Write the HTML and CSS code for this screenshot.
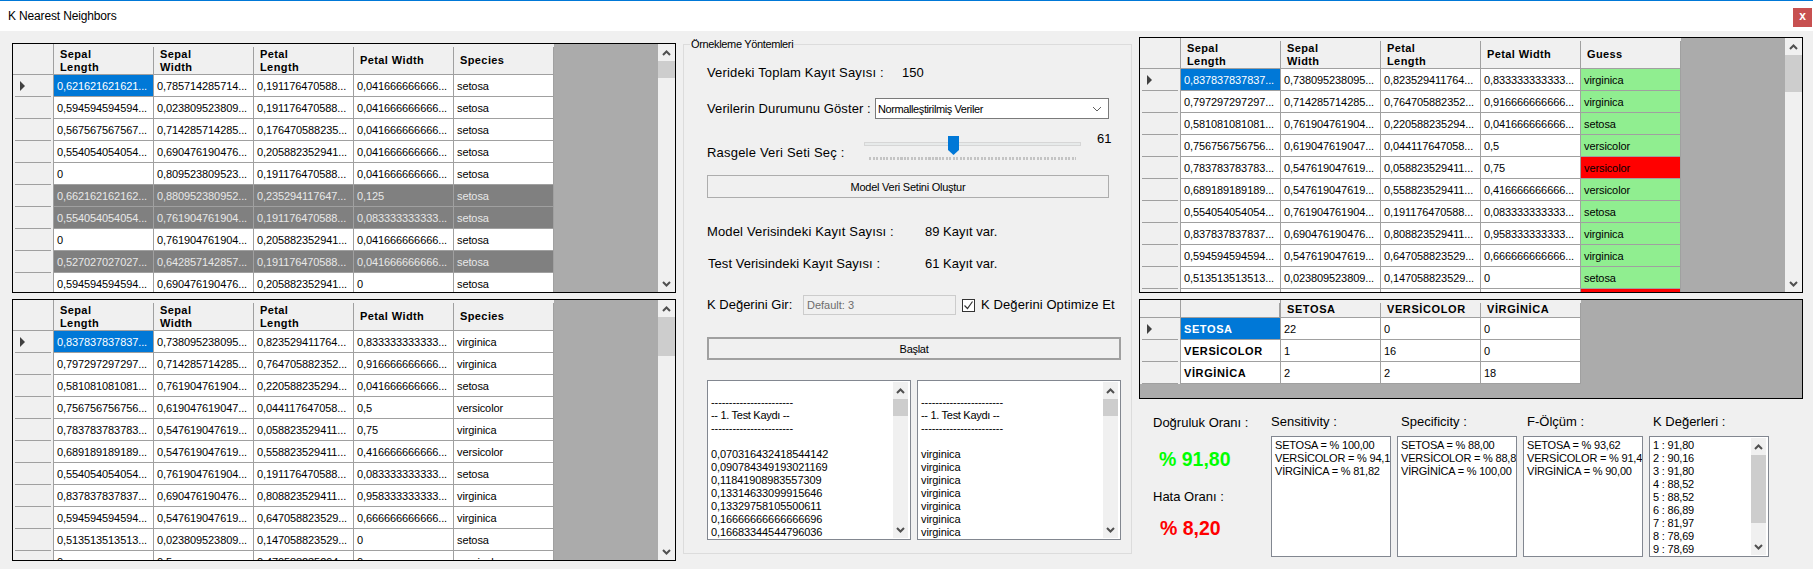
FILE: index.html
```html
<!DOCTYPE html>
<html lang="tr">
<head>
    <meta charset="UTF-8">
    <title>K Nearest Neighbors</title>
    <link rel="stylesheet" href="styles.css">
</head>
<body>
    <div class="titlebar">
        <span class="title">K Nearest Neighbors</span>
        <span class="close">x</span>
    </div>

    <div class="content">
        <!-- Sol taraf: model ve test verileri -->
        <div class="col-left">
            <div class="grid grid-short">
                <div class="grid-area">
                    <table>
                        <tr class="head"><th class="rh"></th><th>Sepal<br>Length</th><th>Sepal<br>Width</th><th>Petal<br>Length</th><th>Petal Width</th><th>Species</th></tr>
                        <tr><th class="rh"><i class="arrow"></i></th><td class="sel">0,621621621621...</td><td>0,785714285714...</td><td>0,191176470588...</td><td>0,041666666666...</td><td>setosa</td></tr>
                        <tr><th class="rh"></th><td>0,594594594594...</td><td>0,023809523809...</td><td>0,191176470588...</td><td>0,041666666666...</td><td>setosa</td></tr>
                        <tr><th class="rh"></th><td>0,567567567567...</td><td>0,714285714285...</td><td>0,176470588235...</td><td>0,041666666666...</td><td>setosa</td></tr>
                        <tr><th class="rh"></th><td>0,554054054054...</td><td>0,690476190476...</td><td>0,205882352941...</td><td>0,041666666666...</td><td>setosa</td></tr>
                        <tr><th class="rh"></th><td>0</td><td>0,809523809523...</td><td>0,191176470588...</td><td>0,041666666666...</td><td>setosa</td></tr>
                        <tr class="dark"><th class="rh"></th><td>0,662162162162...</td><td>0,880952380952...</td><td>0,235294117647...</td><td>0,125</td><td>setosa</td></tr>
                        <tr class="dark"><th class="rh"></th><td>0,554054054054...</td><td>0,761904761904...</td><td>0,191176470588...</td><td>0,083333333333...</td><td>setosa</td></tr>
                        <tr><th class="rh"></th><td>0</td><td>0,761904761904...</td><td>0,205882352941...</td><td>0,041666666666...</td><td>setosa</td></tr>
                        <tr class="dark"><th class="rh"></th><td>0,527027027027...</td><td>0,642857142857...</td><td>0,191176470588...</td><td>0,041666666666...</td><td>setosa</td></tr>
                        <tr><th class="rh"></th><td>0,594594594594...</td><td>0,690476190476...</td><td>0,205882352941...</td><td>0</td><td>setosa</td></tr>
                    </table>
                </div>
                <div class="scrollbar">
                    <div class="sb-btn"><svg width="9" height="6" viewBox="0 0 9 6"><path d="M1 5L4.5 1.5L8 5" fill="none" stroke="#505050" stroke-width="2"/></svg></div>
                    <div class="sb-track"><div class="thumb thumb-17"></div></div>
                    <div class="sb-btn"><svg width="9" height="6" viewBox="0 0 9 6"><path d="M1 1L4.5 4.5L8 1" fill="none" stroke="#505050" stroke-width="2"/></svg></div>
                </div>
            </div>

            <div class="grid grid-tall">
                <div class="grid-area">
                    <table>
                        <tr class="head"><th class="rh"></th><th>Sepal<br>Length</th><th>Sepal<br>Width</th><th>Petal<br>Length</th><th>Petal Width</th><th>Species</th></tr>
                        <tr><th class="rh"><i class="arrow"></i></th><td class="sel">0,837837837837...</td><td>0,738095238095...</td><td>0,823529411764...</td><td>0,833333333333...</td><td>virginica</td></tr>
                        <tr><th class="rh"></th><td>0,797297297297...</td><td>0,714285714285...</td><td>0,764705882352...</td><td>0,916666666666...</td><td>virginica</td></tr>
                        <tr><th class="rh"></th><td>0,581081081081...</td><td>0,761904761904...</td><td>0,220588235294...</td><td>0,041666666666...</td><td>setosa</td></tr>
                        <tr><th class="rh"></th><td>0,756756756756...</td><td>0,619047619047...</td><td>0,044117647058...</td><td>0,5</td><td>versicolor</td></tr>
                        <tr><th class="rh"></th><td>0,783783783783...</td><td>0,547619047619...</td><td>0,058823529411...</td><td>0,75</td><td>virginica</td></tr>
                        <tr><th class="rh"></th><td>0,689189189189...</td><td>0,547619047619...</td><td>0,558823529411...</td><td>0,416666666666...</td><td>versicolor</td></tr>
                        <tr><th class="rh"></th><td>0,554054054054...</td><td>0,761904761904...</td><td>0,191176470588...</td><td>0,083333333333...</td><td>setosa</td></tr>
                        <tr><th class="rh"></th><td>0,837837837837...</td><td>0,690476190476...</td><td>0,808823529411...</td><td>0,958333333333...</td><td>virginica</td></tr>
                        <tr><th class="rh"></th><td>0,594594594594...</td><td>0,547619047619...</td><td>0,647058823529...</td><td>0,666666666666...</td><td>virginica</td></tr>
                        <tr><th class="rh"></th><td>0,513513513513...</td><td>0,023809523809...</td><td>0,147058823529...</td><td>0</td><td>setosa</td></tr>
                        <tr><th class="rh"></th><td>0</td><td>0,5</td><td>0,470588235294...</td><td>0</td><td>versicolor</td></tr>
                    </table>
                </div>
                <div class="scrollbar">
                    <div class="sb-btn"><svg width="9" height="6" viewBox="0 0 9 6"><path d="M1 5L4.5 1.5L8 5" fill="none" stroke="#505050" stroke-width="2"/></svg></div>
                    <div class="sb-track"><div class="thumb thumb-39"></div></div>
                    <div class="sb-btn"><svg width="9" height="6" viewBox="0 0 9 6"><path d="M1 1L4.5 4.5L8 1" fill="none" stroke="#505050" stroke-width="2"/></svg></div>
                </div>
            </div>
        </div>

        <!-- Orta panel: ayarlar -->
        <fieldset class="panel">
            <legend>Örnekleme Yöntemleri</legend>

            <div class="row row-total">
                <span class="lbl lbl-total">Verideki Toplam Kayıt Sayısı :</span>
                <span class="lbl">150</span>
            </div>

            <div class="row row-combo">
                <span class="lbl lbl-combo">Verilerin Durumunu Göster :</span>
                <div class="combo">
                    <span class="combo-text">Normalleştirilmiş Veriler</span>
                    <svg width="10" height="6" viewBox="0 0 10 6"><path d="M1 1L5 5L9 1" fill="none" stroke="#606060" stroke-width="1"/></svg>
                </div>
            </div>

            <div class="row row-slider">
                <span class="lbl lbl-slider">Rasgele Veri Seti Seç :</span>
                <div class="slider">
                    <div class="track"></div>
                    <div class="ticks"></div>
                    <svg class="slider-thumb" width="11" height="19" viewBox="0 0 11 19"><path d="M0 0H11V14L5.5 19L0 14Z" fill="#0078d7"/></svg>
                </div>
                <span class="lbl slider-value">61</span>
            </div>

            <button class="btn btn-model">Model Veri Setini Oluştur</button>

            <div class="row row-model">
                <span class="lbl lbl-count">Model Verisindeki Kayıt Sayısı :</span>
                <span class="lbl">89 Kayıt var.</span>
            </div>
            <div class="row row-test">
                <span class="lbl lbl-count lbl-test">Test Verisindeki Kayıt Sayısı :</span>
                <span class="lbl">61 Kayıt var.</span>
            </div>

            <div class="row row-k">
                <span class="lbl lbl-k">K Değerini Gir:</span>
                <input class="k-input" type="text" value="Default: 3" disabled>
                <div class="check"><svg width="11" height="11" viewBox="0 0 11 11"><path d="M1.5 5.5L4.5 8.5L9.5 1.5" fill="none" stroke="#333" stroke-width="1.2"/></svg></div>
                <span class="lbl check-label">K Değerini Optimize Et</span>
            </div>

            <button class="btn btn-start">Başlat</button>

            <div class="row row-boxes">
                <div class="textbox textbox-log">
                    <div class="textbox-text">
                        <br>
                        -----------------------<br>
                        <span class="log-head">-- 1. Test Kaydı --</span><br>
                        -----------------------<br>
                        <br>
                        0,070316432418544142<br>
                        0,090784349193021169<br>
                        0,11841908983557309<br>
                        0,13314633099915646<br>
                        0,13329758105500611<br>
                        0,16666666666666696<br>
                        0,16683344544796036
                    </div>
                    <div class="scrollbar scrollbar-box">
                        <div class="sb-btn"><svg width="9" height="6" viewBox="0 0 9 6"><path d="M1 5L4.5 1.5L8 5" fill="none" stroke="#505050" stroke-width="2"/></svg></div>
                        <div class="sb-track"><div class="thumb thumb-17"></div></div>
                        <div class="sb-btn"><svg width="9" height="6" viewBox="0 0 9 6"><path d="M1 1L4.5 4.5L8 1" fill="none" stroke="#505050" stroke-width="2"/></svg></div>
                    </div>
                </div>
                <div class="textbox textbox-log">
                    <div class="textbox-text">
                        <br>
                        -----------------------<br>
                        <span class="log-head">-- 1. Test Kaydı --</span><br>
                        -----------------------<br>
                        <br>
                        virginica<br>
                        virginica<br>
                        virginica<br>
                        virginica<br>
                        virginica<br>
                        virginica<br>
                        virginica
                    </div>
                    <div class="scrollbar scrollbar-box">
                        <div class="sb-btn"><svg width="9" height="6" viewBox="0 0 9 6"><path d="M1 5L4.5 1.5L8 5" fill="none" stroke="#505050" stroke-width="2"/></svg></div>
                        <div class="sb-track"><div class="thumb thumb-17"></div></div>
                        <div class="sb-btn"><svg width="9" height="6" viewBox="0 0 9 6"><path d="M1 1L4.5 4.5L8 1" fill="none" stroke="#505050" stroke-width="2"/></svg></div>
                    </div>
                </div>
            </div>
        </fieldset>

        <!-- Sag taraf: sonuclar -->
        <div class="col-right">
            <div class="grid grid-guess">
                <div class="grid-area">
                    <table>
                        <tr class="head"><th class="rh"></th><th>Sepal<br>Length</th><th>Sepal<br>Width</th><th>Petal<br>Length</th><th>Petal Width</th><th>Guess</th></tr>
                        <tr><th class="rh"><i class="arrow"></i></th><td class="sel">0,837837837837...</td><td>0,738095238095...</td><td>0,823529411764...</td><td>0,833333333333...</td><td class="ok">virginica</td></tr>
                        <tr><th class="rh"></th><td>0,797297297297...</td><td>0,714285714285...</td><td>0,764705882352...</td><td>0,916666666666...</td><td class="ok">virginica</td></tr>
                        <tr><th class="rh"></th><td>0,581081081081...</td><td>0,761904761904...</td><td>0,220588235294...</td><td>0,041666666666...</td><td class="ok">setosa</td></tr>
                        <tr><th class="rh"></th><td>0,756756756756...</td><td>0,619047619047...</td><td>0,044117647058...</td><td>0,5</td><td class="ok">versicolor</td></tr>
                        <tr><th class="rh"></th><td>0,783783783783...</td><td>0,547619047619...</td><td>0,058823529411...</td><td>0,75</td><td class="bad">versicolor</td></tr>
                        <tr><th class="rh"></th><td>0,689189189189...</td><td>0,547619047619...</td><td>0,558823529411...</td><td>0,416666666666...</td><td class="ok">versicolor</td></tr>
                        <tr><th class="rh"></th><td>0,554054054054...</td><td>0,761904761904...</td><td>0,191176470588...</td><td>0,083333333333...</td><td class="ok">setosa</td></tr>
                        <tr><th class="rh"></th><td>0,837837837837...</td><td>0,690476190476...</td><td>0,808823529411...</td><td>0,958333333333...</td><td class="ok">virginica</td></tr>
                        <tr><th class="rh"></th><td>0,594594594594...</td><td>0,547619047619...</td><td>0,647058823529...</td><td>0,666666666666...</td><td class="ok">virginica</td></tr>
                        <tr><th class="rh"></th><td>0,513513513513...</td><td>0,023809523809...</td><td>0,147058823529...</td><td>0</td><td class="ok">setosa</td></tr>
                        <tr><th class="rh"></th><td></td><td></td><td></td><td></td><td class="bad"></td></tr>
                    </table>
                </div>
                <div class="scrollbar">
                    <div class="sb-btn"><svg width="9" height="6" viewBox="0 0 9 6"><path d="M1 5L4.5 1.5L8 5" fill="none" stroke="#505050" stroke-width="2"/></svg></div>
                    <div class="sb-track"><div class="thumb thumb-37"></div></div>
                    <div class="sb-btn"><svg width="9" height="6" viewBox="0 0 9 6"><path d="M1 1L4.5 4.5L8 1" fill="none" stroke="#505050" stroke-width="2"/></svg></div>
                </div>
            </div>

            <div class="grid grid-matrix">
                <div class="grid-area">
                    <table>
                        <tr class="head"><th class="rh"></th><th></th><th>SETOSA</th><th>VERSİCOLOR</th><th>VİRGİNİCA</th></tr>
                        <tr><th class="rh"><i class="arrow"></i></th><td class="sel name">SETOSA</td><td>22</td><td>0</td><td>0</td></tr>
                        <tr><th class="rh"></th><td class="name">VERSİCOLOR</td><td>1</td><td>16</td><td>0</td></tr>
                        <tr><th class="rh"></th><td class="name">VİRGİNİCA</td><td>2</td><td>2</td><td>18</td></tr>
                    </table>
                </div>
            </div>

            <div class="results">
                <div class="rates">
                    <div class="lbl rate-label">Doğruluk Oranı :</div>
                    <div class="rate rate-ok">% 91,80</div>
                    <div class="lbl rate-label rate-label-err">Hata Oranı :</div>
                    <div class="rate rate-err">% 8,20</div>
                </div>
                <div class="metric">
                    <div class="lbl metric-label">Sensitivity :</div>
                    <div class="textbox metric-box"><div class="textbox-text">SETOSA = % 100,00<br>VERSİCOLOR = % 94,12<br>VİRGİNİCA = % 81,82</div></div>
                </div>
                <div class="metric">
                    <div class="lbl metric-label">Specificity :</div>
                    <div class="textbox metric-box"><div class="textbox-text">SETOSA = % 88,00<br>VERSİCOLOR = % 88,89<br>VİRGİNİCA = % 100,00</div></div>
                </div>
                <div class="metric">
                    <div class="lbl metric-label">F-Ölçüm :</div>
                    <div class="textbox metric-box"><div class="textbox-text">SETOSA = % 93,62<br>VERSİCOLOR = % 91,43<br>VİRGİNİCA = % 90,00</div></div>
                </div>
                <div class="metric">
                    <div class="lbl metric-label">K Değerleri :</div>
                    <div class="textbox metric-box">
                        <div class="textbox-text">1 : 91,80<br>2 : 90,16<br>3 : 91,80<br>4 : 88,52<br>5 : 88,52<br>6 : 86,89<br>7 : 81,97<br>8 : 78,69<br>9 : 78,69</div>
                        <div class="scrollbar scrollbar-box">
                            <div class="sb-btn"><svg width="9" height="6" viewBox="0 0 9 6"><path d="M1 5L4.5 1.5L8 5" fill="none" stroke="#505050" stroke-width="2"/></svg></div>
                            <div class="sb-track"><div class="thumb thumb-68"></div></div>
                            <div class="sb-btn"><svg width="9" height="6" viewBox="0 0 9 6"><path d="M1 1L4.5 4.5L8 1" fill="none" stroke="#505050" stroke-width="2"/></svg></div>
                        </div>
                    </div>
                </div>
            </div>
        </div>
    </div>
</body>
</html>
```

FILE: styles.css
```css
* {
    box-sizing: border-box;
}

html, body {
    height: 569px;
    margin: 0;
    overflow: hidden;
}

body {
    font-family: "Liberation Sans", Arial, sans-serif;
    font-size: 11px;
    color: #000;
    background-color: #f0f0f0;
}

/* Barre de titre */
.titlebar {
    display: flex;
    justify-content: space-between;
    align-items: center;
    height: 31px;
    padding: 0 1px 0 8px;
    background-color: #fff;
    border-top: 1px solid #0078d7;
}

.title {
    font-size: 12px;
    letter-spacing: -0.15px;
}

.close {
    width: 19px;
    height: 19px;
    margin-top: 3px;
    font-size: 12px;
    font-weight: bold;
    line-height: 17px;
    text-align: center;
    color: #fff;
    background-color: #c75050;
}

.content {
    display: flex;
    padding-left: 12px;
}

.col-left {
    width: 664px;
    padding-top: 12px;
}

.col-right {
    width: 664px;
    margin-left: 7px;
    padding-top: 6px;
}

/* Grilles */
.grid {
    display: flex;
    border: 1px solid #000;
    background-color: #ababab;
    overflow: hidden;
}

.grid-short {
    height: 250px;
}

.grid-tall {
    height: 262px;
    margin-top: 6px;
}

.grid-guess {
    height: 256px;
}

.grid-matrix {
    height: 100px;
    margin-top: 6px;
}

.grid-area {
    flex: 1;
    overflow: hidden;
}

table {
    width: 541px;
    table-layout: fixed;
    border-collapse: separate;
    border-spacing: 0;
    letter-spacing: -0.1px;
}

.grid-matrix table {
    width: 441px;
}

tr {
    height: 22px;
}

td {
    padding: 0 0 0 3px;
    white-space: nowrap;
    overflow: hidden;
    background-color: #fff;
    border-right: 1px solid #a0a0a0;
    border-bottom: 1px solid #a0a0a0;
}

th {
    padding: 0 0 0 6px;
    font-size: 11px;
    line-height: 13px;
    text-align: left;
    background-color: #f0f0f0;
}

.head {
    height: 31px;
}

.head th {
    padding-top: 3px;
    letter-spacing: 0.4px;
    border-bottom: 1px solid #a0a0a0;
    background-image: linear-gradient(#a0a0a0, #a0a0a0);
    background-size: 1px calc(100% - 3px);
    background-position: right bottom;
    background-repeat: no-repeat;
}

.grid-matrix .head {
    height: 18px;
}

.grid-matrix .head th {
    padding-top: 1px;
    letter-spacing: 0.6px;
}

th.rh {
    width: 41px;
    padding-left: 7px;
    border-right: 1px solid #a0a0a0;
    background-image: linear-gradient(#a0a0a0, #a0a0a0);
    background-size: 36px 1px;
    background-position: 2px bottom;
    background-repeat: no-repeat;
}

.head th.rh {
    background-image: none;
}

.grid-matrix .head th:nth-child(2),
.grid-matrix .head th.rh {
    border-right: 1px solid #a0a0a0;
}

.arrow {
    display: block;
    width: 0;
    height: 0;
    border-left: 5px solid #404040;
    border-top: 5px solid transparent;
    border-bottom: 5px solid transparent;
}

td.sel {
    color: #fff;
    background-color: #0078d7;
}

.dark td {
    color: #e8e8e8;
    background-color: #808080;
}

td.ok {
    background-color: #90ee90;
}

td.bad {
    background-color: #f00;
}

td.name {
    font-weight: bold;
    letter-spacing: 0.6px;
}

/* Ascenseurs */
.scrollbar {
    display: flex;
    flex-direction: column;
    width: 17px;
    background-color: #f0f0f0;
}

.sb-btn {
    display: flex;
    justify-content: center;
    align-items: center;
    height: 17px;
}

.sb-track {
    flex: 1;
}

.thumb {
    background-color: #cdcdcd;
}

.thumb-17 {
    height: 17px;
}

.thumb-37 {
    height: 37px;
}

.thumb-39 {
    height: 39px;
}

.thumb-68 {
    height: 68px;
}

/* Panneau central */
.panel {
    width: 449px;
    height: 517px;
    margin: 6px 0 0 7px;
    padding: 14px 10px 0 23px;
    border: 1px solid #dcdcdc;
}

.panel legend {
    margin-left: -17px;
    padding: 0 1px;
    font-size: 11px;
    line-height: 14px;
    letter-spacing: -0.35px;
}

.row {
    display: flex;
    align-items: center;
}

.lbl {
    font-size: 13px;
    line-height: 16px;
    white-space: nowrap;
}

.row-total {
    height: 16px;
}

.lbl-total {
    width: 195px;
    letter-spacing: 0.17px;
}

.row-combo {
    height: 21px;
    margin-top: 17px;
}

.lbl-combo {
    width: 168px;
    letter-spacing: 0.1px;
}

.combo {
    display: flex;
    justify-content: space-between;
    align-items: center;
    width: 234px;
    height: 21px;
    padding: 0 6px 0 2px;
    background-color: #fff;
    border: 1px solid #7a7a7a;
}

.combo-text {
    letter-spacing: -0.4px;
}

.row-slider {
    align-items: flex-start;
    height: 30px;
    margin-top: 12px;
}

.lbl-slider {
    width: 157px;
    margin-top: 14px;
    letter-spacing: 0.2px;
}

.slider {
    position: relative;
    width: 217px;
    height: 30px;
    padding-top: 11px;
}

.track {
    height: 4px;
    background-color: #e7eaea;
    border: 1px solid #d6d6d6;
}

.ticks {
    width: 207px;
    height: 3px;
    margin: 11px 0 0 5px;
    background-image: repeating-linear-gradient(90deg, #c4c4c4 0, #c4c4c4 2px, transparent 2px, transparent 3.5px);
}

.slider-thumb {
    position: absolute;
    top: 5px;
    left: 84px;
}

.slider-value {
    margin-left: 16px;
}

.btn {
    display: block;
    height: 23px;
    padding: 0;
    font-family: inherit;
    font-size: 11px;
    color: #000;
    background-color: #f0f0f0;
}

.btn-model {
    width: 402px;
    margin-top: 14px;
    letter-spacing: -0.25px;
    border: 1px solid #adadad;
}

.row-model {
    height: 16px;
    margin-top: 26px;
}

.lbl-count {
    width: 218px;
    letter-spacing: 0.15px;
}

.row-test {
    height: 16px;
    margin-top: 16px;
}

.lbl-test {
    padding-left: 1px;
    letter-spacing: 0.05px;
}

.row-k {
    height: 20px;
    margin-top: 23px;
}

.lbl-k {
    width: 96px;
}

.k-input {
    width: 153px;
    height: 20px;
    margin: 0;
    padding: 0 3px;
    font-family: inherit;
    font-size: 11px;
    color: #6d6d6d;
    background-color: #f0f0f0;
    border: 1px solid #ccc;
}

.check {
    display: flex;
    justify-content: center;
    align-items: center;
    width: 13px;
    height: 13px;
    margin-left: 6px;
    background-color: #fff;
    border: 1px solid #333;
}

.check-label {
    margin-left: 6px;
    letter-spacing: 0.1px;
}

.btn-start {
    width: 414px;
    margin-top: 22px;
    letter-spacing: -0.3px;
    border: 2px solid #a0a0a0;
}

.row-boxes {
    gap: 6px;
    margin-top: 20px;
}

/* Zones de texte */
.textbox {
    display: flex;
    background-color: #fff;
    border: 1px solid #828790;
    overflow: hidden;
}

.textbox-log {
    width: 204px;
    height: 160px;
}

.textbox-text {
    flex: 1;
    min-width: 0;
    padding: 2px 0 0 3px;
    line-height: 13px;
    letter-spacing: -0.1px;
    white-space: nowrap;
    overflow: hidden;
}

.log-head {
    letter-spacing: -0.3px;
}

.metric-box .textbox-text {
    letter-spacing: -0.2px;
}

.scrollbar-box {
    flex: none;
    width: 15px;
    margin: 1px 2px 1px 0;
}

/* Resultats */
.results {
    display: flex;
    gap: 6px;
}

.rates {
    width: 126px;
    padding-left: 14px;
}

.rate-label {
    margin-top: 16px;
}

.rate-label-err {
    margin-top: 18px;
}

.rate {
    font-size: 19.5px;
    font-weight: bold;
    line-height: 24px;
    white-space: nowrap;
}

.rate-ok {
    margin: 16px 0 0 6px;
    color: #0f0;
}

.rate-err {
    margin: 11px 0 0 7px;
    color: #f00;
}

.metric {
    width: 120px;
    padding-top: 15px;
}

.metric-label {
    padding-left: 4px;
}

.metric:nth-child(2) .metric-label {
    padding-left: 0;
}

.metric-box {
    height: 121px;
    margin-top: 6px;
}
```
